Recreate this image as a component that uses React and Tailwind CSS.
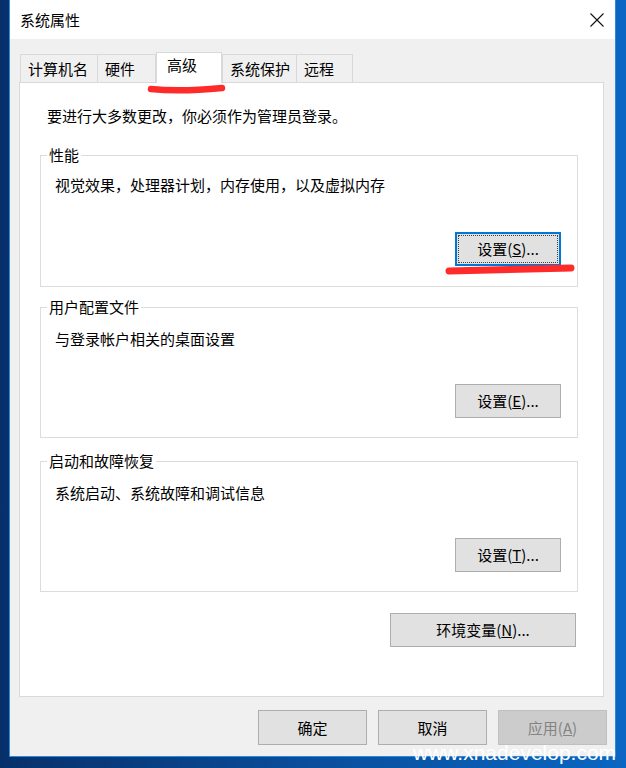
import React from "react";

const FONT = "font-['Noto_Sans_CJK_SC','Noto_Sans',sans-serif]";

function Btn({ children, className = "", focused = false, disabled = false }) {
  if (focused) {
    return (
      <div className={`border-2 border-[#0078d7] bg-[#e1e1e1] p-[1px] ${className}`}>
        <div className="w-full h-full border border-dotted border-[#444] flex items-center justify-center text-[15px] leading-[20px] text-black">
          {children}
        </div>
      </div>
    );
  }
  return (
    <div
      className={`border flex items-center justify-center text-[15px] leading-[20px] ${
        disabled
          ? "bg-[#cccccc] border-[#bfbfbf] text-[#838383]"
          : "bg-[#e1e1e1] border-[#adadad] text-black"
      } ${className}`}
    >
      {children}
    </div>
  );
}

function Group({ title, desc, btn, className = "", descMt, btnMt, pb, focused }) {
  return (
    <fieldset className={`w-[538px] border border-[#dcdcdc] ${pb} ${className}`}>
      <legend className="ml-[6px] px-[2px] text-[15px] leading-[20px] text-black">{title}</legend>
      <div className={`pl-[14px] text-[15px] leading-[20px] text-black ${descMt}`}>{desc}</div>
      <div className={`flex justify-end pr-[16px] ${btnMt}`}>
        <Btn className="w-[106px] h-[34px]" focused={focused}>
          {btn}
        </Btn>
      </div>
    </fieldset>
  );
}

function Tab({ children, w, selected = false, last = false }) {
  if (selected) {
    return (
      <div
        className={`${w} h-[31px] -mb-px relative z-10 bg-white border-t border-x border-[#d9d9d9] pl-[10px] pt-[2px] text-[15px] leading-[20px] text-black`}
      >
        {children}
      </div>
    );
  }
  return (
    <div
      className={`${w} h-[28px] bg-[#f0f0f0] border-t border-l ${last ? "border-r" : ""} border-[#d9d9d9] pl-[7px] pt-[4px] text-[15px] leading-[20px] text-black`}
    >
      {children}
    </div>
  );
}

export default function App() {
  return (
    <div
      className={`${FONT} relative w-[626px] h-[768px] overflow-hidden bg-[linear-gradient(90deg,#07306a_0%,#0a4e9c_50%,#0a66c2_100%)]`}
    >
      <div className="ml-[9px] w-[607px] h-[757px] border-x border-b border-[#2a8ae0] flex flex-col bg-[#f0f0f0]">
        {/* Title bar */}
        <div className="h-[39px] shrink-0 bg-white flex items-center justify-between pl-[10px] pr-[11px]">
          <span className="text-[15px] leading-[20px] text-black">系统属性</span>
          <svg width="14" height="14" viewBox="0 0 14 14">
            <path d="M0.5 0.5 L13.5 13.5 M13.5 0.5 L0.5 13.5" stroke="#111" strokeWidth="1.1" fill="none" />
          </svg>
        </div>

        {/* Body */}
        <div className="flex-1 flex flex-col pt-[13px] pl-[9px] pr-[11px]">
          <div className="flex items-end h-[30px] pl-[1px]">
            <Tab w="w-[77px]">计算机名</Tab>
            <Tab w="w-[59px]" last>硬件</Tab>
            <Tab w="w-[66px]" selected>高级</Tab>
            <Tab w="w-[74px]">系统保护</Tab>
            <Tab w="w-[57px]" last>远程</Tab>
          </div>

          <div className="h-[615px] border border-[#d9d9d9] bg-white flex flex-col pl-[20px] pt-[23px]">
            <div className="pl-[7px] text-[15px] leading-[20px] text-black">
              要进行大多数更改，你必须作为管理员登录。
            </div>

            <Group
              className="mt-[19px]"
              title="性能"
              desc="视觉效果，处理器计划，内存使用，以及虚拟内存"
              descMt="mt-[10px]"
              btnMt="mt-[37px]"
              pb="pb-[20px]"
              focused
              btn={
                <span>
                  设置(<span className="underline">S</span>)...
                </span>
              }
            />
            <Group
              className="mt-[10px]"
              title="用户配置文件"
              desc="与登录帐户相关的桌面设置"
              descMt="mt-[12px]"
              btnMt="mt-[35px]"
              pb="pb-[19px]"
              btn={
                <span>
                  设置(<span className="underline">E</span>)...
                </span>
              }
            />
            <Group
              className="mt-[13px]"
              title="启动和故障恢复"
              desc="系统启动、系统故障和调试信息"
              descMt="mt-[12px]"
              btnMt="mt-[35px]"
              pb="pb-[19px]"
              btn={
                <span>
                  设置(<span className="underline">T</span>)...
                </span>
              }
            />

            <div className="flex justify-end pr-[27px] mt-[21px]">
              <Btn className="w-[186px] h-[34px]">
                <span>
                  环境变量(<span className="underline">N</span>)...
                </span>
              </Btn>
            </div>
          </div>

          <div className="flex justify-end gap-[11px] mt-[13px] -mr-[3px]">
            <Btn className="w-[109px] h-[35px]">确定</Btn>
            <Btn className="w-[109px] h-[35px]">取消</Btn>
            <Btn className="w-[109px] h-[35px]" disabled>
              <span>
                应用(<span className="underline">A</span>)
              </span>
            </Btn>
          </div>
        </div>
      </div>

      {/* Red hand-drawn marks */}
      <svg className="absolute left-0 top-0 pointer-events-none" width="626" height="768">
        <path d="M151 89 Q180 92 222 88" stroke="#ff2a2a" strokeWidth="6.5" strokeLinecap="round" fill="none" />
        <path d="M449 271 Q500 270 571 268" stroke="#ff2a2a" strokeWidth="7" strokeLinecap="round" fill="none" />
      </svg>

      {/* Watermark */}
      <div className="absolute left-[413px] top-[741px] font-['Liberation_Sans',sans-serif] text-[21px] leading-[24px] text-white">
        www.xnadevelop.com
      </div>
    </div>
  );
}
